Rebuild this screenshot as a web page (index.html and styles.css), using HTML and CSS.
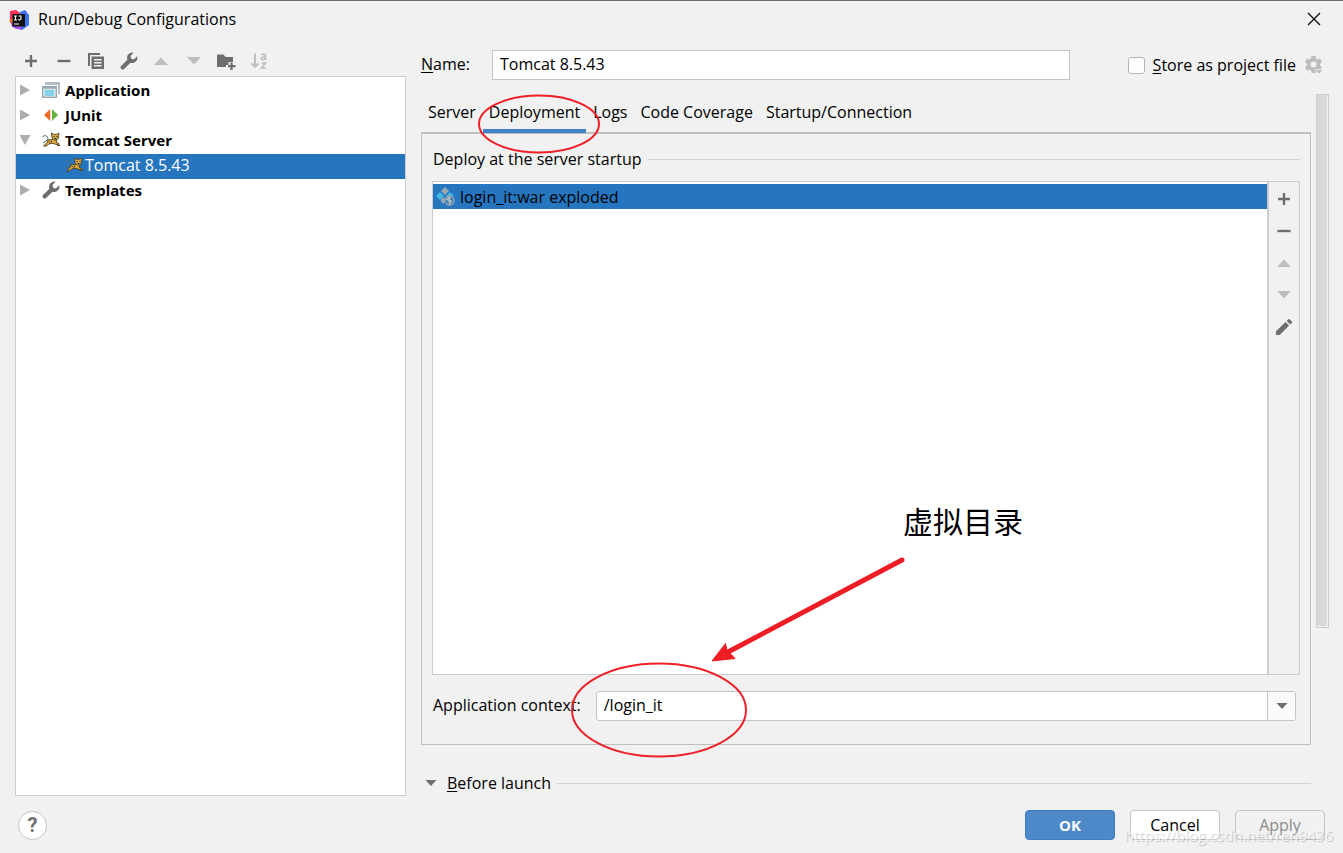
FILE: index.html
```html
<!DOCTYPE html>
<html lang="en">
<head>
<meta charset="utf-8">
<title>Run/Debug Configurations</title>
<link rel="stylesheet" href="styles.css">
</head>
<body>
<svg class="defs" aria-hidden="true">
  <symbol id="plus" viewBox="0 0 18 18"><path d="M9 3v12M3 9h12" fill="none" stroke="#6e6e6e" stroke-width="2.4"/></symbol>
  <symbol id="minus" viewBox="0 0 18 18"><path d="M2.500 9h13" fill="none" stroke="#6e6e6e" stroke-width="2.400"/></symbol>
  <symbol id="copy" viewBox="0 0 18 18"><path d="M1 1h12v2H3v11H1z" fill="#6e6e6e"/><path fill-rule="evenodd" d="M4.500 4.500H17V17H4.500zM7 7v1.500h7.500V7zM7 10v1.500h7.500V10zM7 13v1.500h7.500V13z" fill="#6e6e6e"/></symbol>
  <symbol id="wrench" viewBox="0 0 18 18"><path d="M13.600.8a5.200 5.200 0 0 0-6.200 6.900L1 14.100a1.700 1.700 0 0 0 0 2.400l.6.600a1.700 1.700 0 0 0 2.400 0l6.500-6.400a5.200 5.200 0 0 0 6.700-6.400l-3.300 3.100-2.700-.7-.7-2.700z" fill="#6e6e6e"/></symbol>
  <symbol id="up" viewBox="0 0 18 18"><path d="M2 13L9 5.500 16 13z" fill="#bdbdbd"/></symbol>
  <symbol id="down" viewBox="0 0 18 18"><path d="M2 5h14L9 12.500z" fill="#bdbdbd"/></symbol>
  <symbol id="folder" viewBox="0 0 20 18"><path d="M1 2.500h6.500l2 2.500H17v5h-4.500v3H10V15H1z" fill="#6e6e6e"/><path d="M15.500 10.500v7.500M12 14.200h7.500" fill="none" stroke="#6e6e6e" stroke-width="2.200"/></symbol>
  <symbol id="sort" viewBox="0 0 18 18"><path d="M5 1.500v13M1.500 11.500L5 15l3.500-3.500" fill="none" stroke="#bdbdbd" stroke-width="1.900"/><path d="M11.500 3c1-1.200 4-1.200 4 .8V8M15.500 4.700c-2 0-4.300.1-4.300 1.700 0 1.900 3.600 1.600 4.300-.3M11.500 11h4l-4 5H16" fill="none" stroke="#bdbdbd" stroke-width="1.600"/></symbol>
  <symbol id="app" viewBox="0 0 18 18"><path d="M3 1h15v12h-2V4H3z" fill="#b1bcc5"/><path fill-rule="evenodd" d="M0 5h15v12H0zM1.500 7.800v7.700h12V7.800z" fill="#9aa7b0"/><path d="M2.500 8.500h10v6.500h-10z" fill="#86d0e9"/></symbol>
  <symbol id="junit" viewBox="0 0 18 18"><path d="M8.200 3v12L2 9z" fill="#f26522"/><path d="M10 3v12l6-6z" fill="#62b543"/></symbol>
  <symbol id="tomcat" viewBox="0 0 18 18"><path d="M6.500 11.500C5.500 8.500 6.500 6 4.500 5 3 4.200 1 4.800.5 6M6 8.500L1 12" fill="none" stroke="#536b70" stroke-width="1"/><path d="M6 9c2-1 3.500.5 5-1l3.800.5-.4 3 3 1.500-1 1-3.400-.9-3-.8-3 .6-3 2.300L2.500 14 5 11.500z" fill="#dda83c" stroke="#40351d" stroke-width=".8"/><path d="M9.500 2l2 1.300h3.200L17 2l-.5 5-1.800 2h-2.900L10 7z" fill="#d9aa48" stroke="#40351d" stroke-width=".8"/><path d="M11.500 5.500h1M14.500 5.500h1M12.600 7.500h1.800" stroke="#151515" stroke-width="1.100"/><path d="M1 15h3M15 14.500h3M7 10l1 1.500M9.500 9.500v2" stroke="#594016" stroke-width="1"/></symbol>
  <symbol id="artifact" viewBox="0 0 19 19"><path d="M9 0l4 4-4 4-4-4z" fill="#9aa7b0"/><path d="M4 5l4 4-4 4-4-4zM14 5l4 4H10z" fill="#40b6e0"/><path d="M7 10l3 3-3 4-2.500-3.500z" fill="#9aa7b0"/><circle cx="13.500" cy="13.500" r="4.500" fill="#357eb9" stroke="#9aa7b0" stroke-width="1.300"/><path d="M10 12l3-2.500 2 1-1 2 2 1-1 3-2 1-.5-3z" fill="#aeb9c1"/></symbol>
  <symbol id="pencil" viewBox="0 0 18 18"><path d="M1 13.300L10.500 4l3.600 3.600L4.700 17H1zM11.600 2.900l1.500-1.500a1.200 1.200 0 0 1 1.700 0l2 2a1.200 1.200 0 0 1 0 1.700l-1.500 1.500z" fill="#6e6e6e"/></symbol>
  <symbol id="closed" viewBox="0 0 12 12"><path d="M1 .5L11 6 1 11.500z" fill="#adadad"/></symbol>
  <symbol id="open" viewBox="0 0 12 12"><path d="M.5 1h11L6 11z" fill="#adadad"/></symbol>
  <symbol id="caret" viewBox="0 0 12 12"><path d="M.5 3h11L6 9z" fill="#6e6e6e"/></symbol>
</svg>

<header class="titlebar">
  <svg class="logo" viewBox="0 0 20 20" aria-hidden="true"><path d="M1 1l6-1 7 5-4 9-9-1z" fill="#fe315d"/><path d="M0 11l5-4 6 10-4 2z" fill="#f97a12"/><path d="M11 2l5-2 4 5v10l-7 5-8-2z" fill="#3c70f0"/><path d="M2 12l8 1 3 7-10-3z" fill="#b74af7"/><path d="M3.500 4h12.500v12.500H3.500z" fill="#111"/><path d="M5 6h3M6.500 6v4M5 10h3M9.500 6h3M12 6v2.500c0 1.500-1.500 1.700-2.800.9M5 14h5" fill="none" stroke="#fff" stroke-width="1.100"/></svg>
  <h1 class="title">Run/Debug Configurations</h1>
  <button class="icon-btn" aria-label="Close"><svg class="icon" viewBox="0 0 18 18"><path d="M3 2l12 12M15 2L3 14" stroke="#111" stroke-width="1.400"/></svg></button>
</header>

<main class="dialog">
  <aside class="sidebar">
    <div class="toolbar">
      <button class="icon-btn" aria-label="Add"><svg class="icon"><use href="#plus"/></svg></button>
      <button class="icon-btn" aria-label="Remove"><svg class="icon"><use href="#minus"/></svg></button>
      <button class="icon-btn" aria-label="Copy"><svg class="icon"><use href="#copy"/></svg></button>
      <button class="icon-btn" aria-label="Edit templates"><svg class="icon"><use href="#wrench"/></svg></button>
      <button class="icon-btn" aria-label="Move up" disabled><svg class="icon"><use href="#up"/></svg></button>
      <button class="icon-btn" aria-label="Move down" disabled><svg class="icon"><use href="#down"/></svg></button>
      <button class="icon-btn" aria-label="Create folder"><svg class="icon wide"><use href="#folder"/></svg></button>
      <button class="icon-btn" aria-label="Sort" disabled><svg class="icon"><use href="#sort"/></svg></button>
    </div>
    <ul class="tree" role="tree">
      <li class="node" role="treeitem"><svg class="twisty"><use href="#closed"/></svg><svg class="icon"><use href="#app"/></svg>Application</li>
      <li class="node" role="treeitem"><svg class="twisty"><use href="#closed"/></svg><svg class="icon"><use href="#junit"/></svg>JUnit</li>
      <li class="node" role="treeitem"><svg class="twisty"><use href="#open"/></svg><svg class="icon"><use href="#tomcat"/></svg>Tomcat Server</li>
      <li class="node child" role="treeitem" aria-selected="true"><svg class="icon"><use href="#tomcat"/></svg>Tomcat 8.5.43</li>
      <li class="node" role="treeitem"><svg class="twisty"><use href="#closed"/></svg><svg class="icon"><use href="#wrench"/></svg>Templates</li>
    </ul>
  </aside>

  <section class="editor">
    <div class="name-row">
      <label class="name-label" for="name"><u>N</u>ame:</label>
      <input class="field name-field" id="name" type="text" value="Tomcat 8.5.43">
      <div class="store">
        <input class="check" id="store" type="checkbox">
        <label for="store"><u>S</u>tore as project file</label>
        <button class="icon-btn gear" aria-label="Store options"><svg class="icon" viewBox="0 0 18 18"><path fill-rule="evenodd" d="M6.500 0h4l.5 2.600 1.500.8L15 2.500l2 3.500-2 1.700v1.700l2 1.600-2 3.500-2.500-.9-1.500.8-.5 2.600h-4L6 14.400l-1.500-.8-2.500.9L0 11l2-1.600V7.700L0 6l2-3.500 2.500.9L6 2.600zM8.500 5.500a3 3 0 1 0 0 6 3 3 0 0 0 0-6z" fill="#bdbdbd"/><path d="M10 13.500h8L14 18z" fill="#bdbdbd" stroke="#f1f1f1" stroke-width=".6"/></svg></button>
      </div>
    </div>

    <div class="scroll-area">
      <div class="content">
        <nav class="tabs" role="tablist">
          <button class="tab" role="tab">Server</button>
          <button class="tab active" role="tab" aria-selected="true">Deployment<svg class="tab-mark" viewBox="0 0 124 60" aria-hidden="true"><ellipse cx="62" cy="30" rx="60" ry="28.500" fill="none" stroke="#ee2027" stroke-width="2"/></svg></button>
          <button class="tab" role="tab">Logs</button>
          <button class="tab" role="tab">Code Coverage</button>
          <button class="tab" role="tab">Startup/Connection</button>
        </nav>
        <div class="panel" role="tabpanel">
          <h2 class="rule-title">Deploy at the server startup</h2>
          <div class="deploy">
            <ul class="artifacts">
              <li class="artifact"><svg class="artifact-icon"><use href="#artifact"/></svg>login_it:war exploded</li>
            </ul>
            <div class="side-tools">
              <button class="icon-btn" aria-label="Add artifact"><svg class="icon"><use href="#plus"/></svg></button>
              <button class="icon-btn" aria-label="Remove artifact"><svg class="icon"><use href="#minus"/></svg></button>
              <button class="icon-btn" aria-label="Move artifact up" disabled><svg class="icon"><use href="#up"/></svg></button>
              <button class="icon-btn" aria-label="Move artifact down" disabled><svg class="icon"><use href="#down"/></svg></button>
              <button class="icon-btn" aria-label="Edit artifact"><svg class="icon"><use href="#pencil"/></svg></button>
            </div>
            <div class="note">
              <span class="note-text" lang="zh">虚拟目录</span>
              <svg class="arrow" viewBox="0 0 194 106" aria-hidden="true"><path d="M190 4L16 96" stroke="#ee1c24" stroke-width="5" stroke-linecap="round"/><path d="M0 105L13.500 87.500 15 94l8 8.500z" fill="#ee1c24" stroke="#ee1c24"/></svg>
            </div>
          </div>
          <div class="context-row">
            <label for="context">Application context:</label>
            <div class="combo">
              <input class="combo-input" id="context" type="text" value="/login_it">
              <button class="combo-btn" aria-label="Show contexts"><svg class="twisty"><use href="#caret"/></svg></button>
              <svg class="context-mark" viewBox="0 0 176 96" aria-hidden="true"><ellipse cx="88" cy="48" rx="87" ry="46.500" fill="none" stroke="#ee2027" stroke-width="2"/></svg>
            </div>
          </div>
        </div>
        <h2 class="rule-title launch"><svg class="twisty"><use href="#caret"/></svg><span><u>B</u>efore launch</span></h2>
      </div>
      <div class="scrollbar"><div class="thumb"></div></div>
    </div>
  </section>
</main>

<footer class="footer">
  <button class="help" aria-label="Help">?</button>
  <button class="btn primary">OK</button>
  <button class="btn">Cancel</button>
  <button class="btn" disabled>Apply</button>
  <span class="watermark">https://blog.csdn.net/ren9436</span>
</footer>
</body>
</html>
```
FILE: styles.css
```css
* {
  box-sizing: border-box;
}

body {
  display: flex;
  flex-direction: column;
  min-height: 100vh;
  margin: 0;
  border-top: 1px solid #6e6c6e;
  background: #f1f1f1;
  color: #000;
  font: 16px/20px "Open Sans", "Noto Sans CJK SC", sans-serif;
}

button,
input {
  font: inherit;
  color: inherit;
}

button {
  padding: 0;
  border: 0;
  background: none;
}

u {
  text-underline-offset: 2px;
}

.defs {
  position: absolute;
  width: 0;
  height: 0;
}

.icon {
  display: block;
  flex: none;
  width: 18px;
  height: 18px;
}

.icon.wide {
  width: 20px;
}

.icon-btn {
  display: flex;
  flex: none;
  align-items: center;
  justify-content: center;
  width: 24px;
  height: 24px;
}

.twisty {
  flex: none;
  width: 12px;
  height: 12px;
}

.titlebar {
  display: flex;
  align-items: center;
  height: 37px;
  padding: 0 17px 0 9px;
}

.logo {
  width: 20px;
  height: 20px;
}

.title {
  flex: 1;
  margin: 0 0 0 9px;
  padding-bottom: 2px;
  font-size: 16px;
  font-weight: 400;
}

.dialog {
  display: grid;
  flex: 1;
  grid-template-columns: 391px 1fr;
  gap: 15px;
  padding: 0 14px 0 15px;
}

.sidebar {
  display: flex;
  flex-direction: column;
}

.toolbar {
  display: flex;
  justify-content: space-between;
  width: 252px;
  margin-left: 4px;
  padding: 11px 0 3px;
}

.tree {
  flex: 1;
  margin: 0;
  padding: 2px 0 0;
  border: 1px solid #cdcdcd;
  background: #fff;
  list-style: none;
}

.node {
  display: flex;
  align-items: center;
  height: 25px;
  padding: 0 0 3px 3px;
  font-family: "Noto Sans", sans-serif;
  font-size: 15px;
  font-weight: 700;
}

.node .icon {
  margin: 0 5px 0 11px;
}

.node.child {
  padding-left: 49px;
  background: #2675bf;
  color: #fff;
  font-family: "Open Sans", sans-serif;
  font-size: 16px;
  font-weight: 400;
}

.node.child .icon {
  margin: 0 2px 0 0;
}

.editor {
  display: flex;
  flex-direction: column;
  min-width: 0;
}

.name-row {
  display: flex;
  align-items: center;
  padding-top: 12px;
}

.name-label {
  width: 71px;
  padding-bottom: 2px;
}

.field {
  height: 30px;
  padding: 0 7px 2px;
  border: 1px solid #c4c4c4;
  background: #fff;
}

.name-field {
  flex: 1;
  min-width: 0;
}

.store {
  display: flex;
  align-items: center;
  margin-left: 58px;
}

.check {
  width: 17px;
  height: 17px;
  margin: 0 8px 0 0;
  border: 1px solid #b4b4b4;
  border-radius: 3px;
  background: #fff;
  appearance: none;
}

.gear {
  margin: 0 3px 0 6px;
}

.scroll-area {
  display: flex;
  flex: 1;
  gap: 5px;
  padding-top: 14px;
}

.content {
  display: flex;
  flex: 1;
  flex-direction: column;
  min-width: 0;
}

.tabs {
  display: flex;
  gap: 1px;
  padding-left: 1px;
}

.tab {
  position: relative;
  height: 39px;
  padding: 0 6px;
  border-bottom: 4px solid transparent;
}

.tab.active {
  z-index: 1;
  border-color: #4083c9;
}

.tab-mark {
  position: absolute;
  top: 0;
  left: -6px;
  width: 124px;
  height: 60px;
}

.panel {
  display: flex;
  flex: 1;
  flex-direction: column;
  margin-top: -1px;
  padding: 15px 10px 23px;
  border: 1px solid #bfbfbf;
  border-top-width: 2px;
}

.rule-title {
  display: flex;
  align-items: center;
  gap: 6px;
  margin: 0;
  padding-left: 1px;
  font-size: 16px;
  font-weight: 400;
}

.rule-title::after {
  content: "";
  flex: 1;
  height: 1px;
  background: #d1d1d1;
}

.deploy {
  position: relative;
  display: flex;
  flex: 1;
  margin: 12px 0 16px;
  border: 1px solid #cdcdcd;
}

.artifacts {
  flex: 1;
  margin: 0;
  padding: 2px 0 0;
  border-right: 2px solid #cdcdcd;
  background: #fff;
  list-style: none;
}

.artifact {
  display: flex;
  align-items: center;
  gap: 5px;
  height: 25px;
  padding-left: 3px;
  background: #2675bf;
}

.artifact-icon {
  width: 19px;
  height: 19px;
}

.side-tools {
  display: flex;
  flex-direction: column;
  gap: 8px;
  padding: 5px 3px;
}

.note {
  position: absolute;
  right: 276px;
  bottom: 12px;
  width: 312px;
}

.note-text {
  display: block;
  font: 30px/40px "Noto Sans CJK SC", sans-serif;
  text-align: right;
}

.arrow {
  display: block;
  width: 194px;
  height: 106px;
  margin: 16px 0 0 1px;
}

.context-row {
  display: flex;
  align-items: center;
  gap: 15px;
  padding: 0 4px 0 1px;
}

.context-row label {
  padding-bottom: 2px;
}

.combo {
  position: relative;
  display: flex;
  flex: 1;
  height: 30px;
  border: 1px solid #c4c4c4;
  border-radius: 3px;
  background: #fff;
}

.combo-input {
  flex: 1;
  min-width: 0;
  padding: 0 7px 2px;
  border: 0;
  background: transparent;
}

.combo-btn {
  display: flex;
  align-items: center;
  justify-content: center;
  width: 28px;
  border-left: 1px solid #c4c4c4;
  background: #fafafa;
}

.context-mark {
  position: absolute;
  top: -30px;
  left: -26px;
  width: 176px;
  height: 96px;
}

.launch {
  padding: 28px 0 3px 4px;
}

.launch .twisty {
  margin-right: 4px;
}

.scrollbar {
  width: 13px;
}

.thumb {
  height: 76%;
  border: 1px solid #cdcdcd;
  background: #d9d9d9;
  box-shadow: inset -1px -1px #f1f1f1;
}

.footer {
  position: relative;
  display: flex;
  align-items: center;
  gap: 15px;
  padding: 14px 18px 13px;
}

.help {
  width: 29px;
  height: 29px;
  margin-right: auto;
  border: 1px solid #c4c4c4;
  border-radius: 50%;
  background: #fff;
  color: #6e6e6e;
  font: 700 20px/27px Roboto, sans-serif;
}

.btn {
  width: 90px;
  height: 30px;
  border: 1px solid #c4c4c4;
  border-radius: 4px;
  background: #fff;
}

.btn:disabled {
  background: transparent;
  color: #8c8c8c;
}

.primary {
  border-color: #3f7cc0;
  background: #4d89c9;
  color: #fff;
  font-size: 15px;
  font-weight: 700;
}

.watermark {
  position: absolute;
  right: 10px;
  bottom: 8px;
  color: rgba(255, 255, 255, 0.7);
  font-size: 15px;
  text-shadow: 1px 1px 1px rgba(0, 0, 0, 0.2);
  pointer-events: none;
}
```
